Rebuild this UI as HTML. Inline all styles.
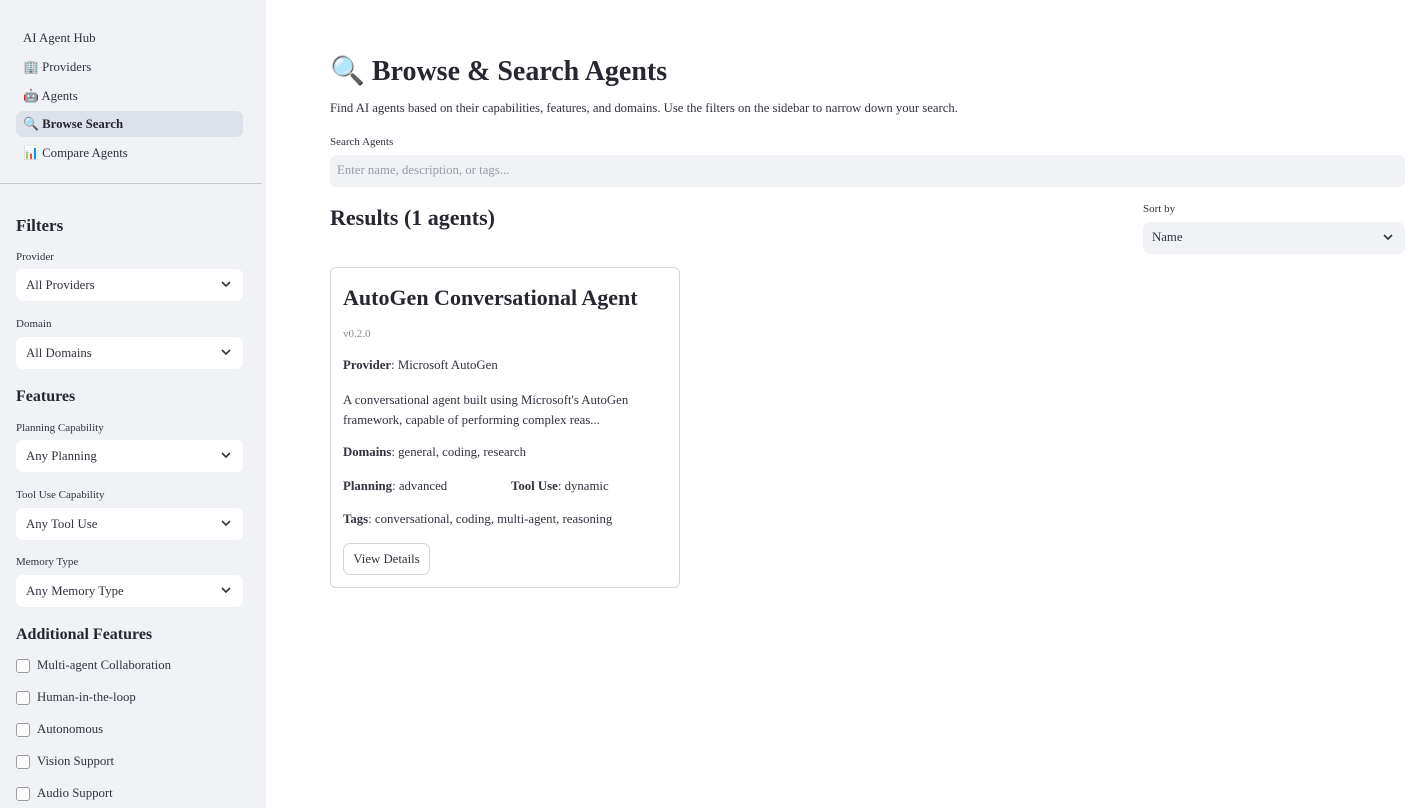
<!DOCTYPE html>
<html><head><meta charset="utf-8"><style>
*{box-sizing:border-box;margin:0;padding:0}
body{width:1417px;height:808px;overflow:hidden;background:#fff;font-family:"Liberation Serif",serif;color:#31333f;position:relative}
.a{position:absolute;white-space:nowrap}
#sb{position:absolute;left:0;top:0;width:266px;height:808px;background:#f0f2f6}
.nav{position:absolute;left:16px;width:227px;height:26px;line-height:26px;padding-left:7px;font-size:12.8px;color:#31333f;border-radius:7px}
.nav.act{background:#dde1ea;font-weight:bold;color:#262730}
.lbl{position:absolute;left:16px;font-size:11px;color:#31333f}
.sel{position:absolute;left:16px;width:227px;height:32px;background:#fff;border-radius:7px;font-size:12.8px;line-height:32px;padding-left:10px;color:#31333f}
.sel svg,.sel2 svg{position:absolute;right:12px;top:12px}
h3{position:absolute;left:16px;font-size:16px;font-weight:bold;color:#262730}
.cb{position:absolute;left:16px;font-size:12.8px;color:#31333f;height:16px;line-height:16px;padding-left:21px}
.cb:before{content:"";position:absolute;left:0;top:2px;width:12px;height:12px;border:1px solid #9a9ca6;border-radius:3px;background:#fff}
.ct{position:absolute;left:343px;font-size:12.8px;color:#31333f}
</style></head><body>
<div id="sb">
<div class="nav" style="top:25px">AI Agent Hub</div>
<div class="nav" style="top:54px">🏢 Providers</div>
<div class="nav" style="top:83px">🤖 Agents</div>
<div class="nav act" style="top:111px">🔍 Browse Search</div>
<div class="nav" style="top:140px">📊 Compare Agents</div>
<div class="a" style="left:0;top:183px;width:262px;height:1px;background:#c8cad0"></div>
<h3 style="top:216px;font-size:17px">Filters</h3>
<div class="lbl" style="top:251px">Provider</div>
<div class="sel" style="top:269px">All Providers<svg width="10" height="7" viewBox="0 0 10 7"><path d="M1 1l4 4 4-4" fill="none" stroke="#31333f" stroke-width="1.6"/></svg></div>
<div class="lbl" style="top:318px">Domain</div>
<div class="sel" style="top:337px">All Domains<svg width="10" height="7" viewBox="0 0 10 7"><path d="M1 1l4 4 4-4" fill="none" stroke="#31333f" stroke-width="1.6"/></svg></div>
<h3 style="top:388px">Features</h3>
<div class="lbl" style="top:422px">Planning Capability</div>
<div class="sel" style="top:440px">Any Planning<svg width="10" height="7" viewBox="0 0 10 7"><path d="M1 1l4 4 4-4" fill="none" stroke="#31333f" stroke-width="1.6"/></svg></div>
<div class="lbl" style="top:489px">Tool Use Capability</div>
<div class="sel" style="top:508px">Any Tool Use<svg width="10" height="7" viewBox="0 0 10 7"><path d="M1 1l4 4 4-4" fill="none" stroke="#31333f" stroke-width="1.6"/></svg></div>
<div class="lbl" style="top:556px">Memory Type</div>
<div class="sel" style="top:575px">Any Memory Type<svg width="10" height="7" viewBox="0 0 10 7"><path d="M1 1l4 4 4-4" fill="none" stroke="#31333f" stroke-width="1.6"/></svg></div>
<h3 style="top:626px">Additional Features</h3>
<div class="cb" style="top:657px">Multi-agent Collaboration</div>
<div class="cb" style="top:689px">Human-in-the-loop</div>
<div class="cb" style="top:721px">Autonomous</div>
<div class="cb" style="top:753px">Vision Support</div>
<div class="cb" style="top:785px">Audio Support</div>
</div>

<div class="a" style="left:330px;top:54px;font-size:28px;font-weight:bold;color:#262730">🔍 Browse &amp; Search Agents</div>
<div class="a" style="left:330px;top:101px;font-size:12.7px">Find AI agents based on their capabilities, features, and domains. Use the filters on the sidebar to narrow down your search.</div>
<div class="a" style="left:330px;top:136px;font-size:11px">Search Agents</div>
<div class="a" style="left:330px;top:155px;width:1075px;height:32px;background:#f0f2f6;border-radius:7px;font-size:12.8px;line-height:30px;padding-left:7px;color:#9a9ca6">Enter name, description, or tags...</div>
<div class="a" style="left:330px;top:205px;font-size:22px;font-weight:bold;color:#262730">Results (1 agents)</div>
<div class="a" style="left:1143px;top:203px;font-size:11px">Sort by</div>
<div class="sel sel2" style="left:1143px;top:222px;width:262px;background:#f0f2f6;padding-left:9px;line-height:30px">Name<svg width="10" height="7" viewBox="0 0 10 7"><path d="M1 1l4 4 4-4" fill="none" stroke="#31333f" stroke-width="1.6"/></svg></div>

<div class="a" style="left:330px;top:267px;width:350px;height:321px;border:1px solid #d5d6da;border-radius:6px"></div>
<div class="a" style="left:343px;top:285px;font-size:22px;font-weight:bold;color:#262730">AutoGen Conversational Agent</div>
<div class="ct" style="top:328px;font-size:11px;color:#8a8b93">v0.2.0</div>
<div class="ct" style="top:358px"><b>Provider</b>: Microsoft AutoGen</div>
<div class="ct" style="top:390px;line-height:20px">A conversational agent built using Microsoft's AutoGen<br>framework, capable of performing complex reas...</div>
<div class="ct" style="top:445px"><b>Domains</b>: general, coding, research</div>
<div class="ct" style="top:479px"><b>Planning</b>: advanced</div>
<div class="ct" style="top:479px;left:511px"><b>Tool Use</b>: dynamic</div>
<div class="ct" style="top:512px"><b>Tags</b>: conversational, coding, multi-agent, reasoning</div>
<div class="a" style="left:343px;top:543px;width:87px;height:32px;border:1px solid #d5d6da;border-radius:7px;font-size:12.8px;line-height:30px;text-align:center">View Details</div>
</body></html>
